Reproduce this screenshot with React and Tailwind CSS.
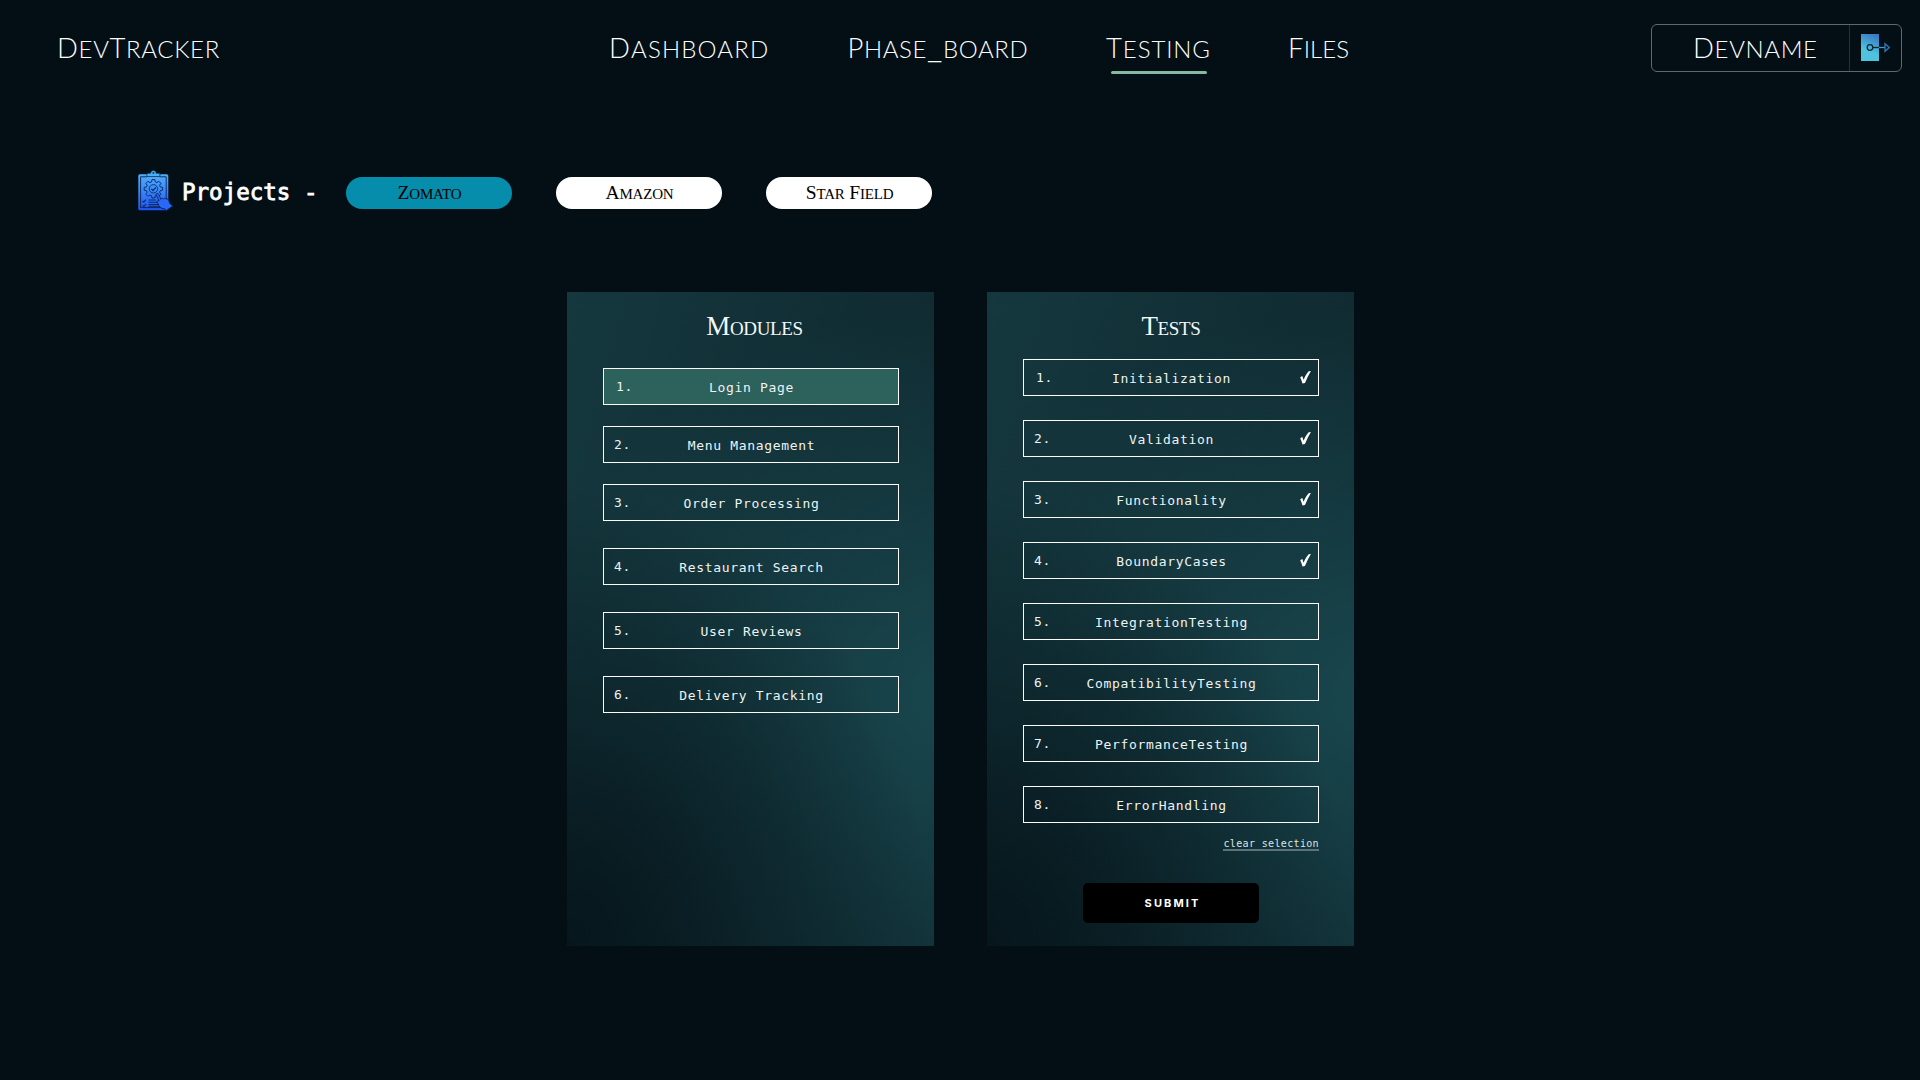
import React from "react";

const modules = ["Login Page", "Menu Management", "Order Processing", "Restaurant Search", "User Reviews", "Delivery Tracking"];

const tests = [
  ["Initialization", true],
  ["Validation", true],
  ["Functionality", true],
  ["BoundaryCases", true],
  ["IntegrationTesting", false],
  ["CompatibilityTesting", false],
  ["PerformanceTesting", false],
  ["ErrorHandling", false],
];

/* Renders capitals at full size and the remaining letters as small capitals. */
function Caps({ text, small }) {
  return text.split(/([A-Z ]+)/).map((part, i) =>
    /^[A-Z ]*$/.test(part) ? part : (
      <span key={i} className={`[font-variant-caps:small-caps] ${small}`}>{part}</span>
    )
  );
}

function NavText({ text, className = "" }) {
  return (
    <span className={`block whitespace-nowrap font-['Lato',sans-serif] text-[27.5px] font-light leading-[47px] ${className}`}>
      <Caps text={text} small="text-[34px] leading-[0]" />
    </span>
  );
}

function DoorIcon() {
  return (
    <svg width="30" height="28" viewBox="0 0 30 28" fill="none">
      <defs>
        <linearGradient id="door" x1="16" y1="0" x2="6" y2="22" gradientUnits="userSpaceOnUse">
          <stop offset="0" stopColor="#3b74bd" />
          <stop offset="0.45" stopColor="#41a0d2" />
          <stop offset="0.8" stopColor="#4fc3dd" />
        </linearGradient>
      </defs>
      <rect width="18" height="27" fill="url(#door)" />
      <circle cx="9" cy="13.5" r="2.8" stroke="#0b2631" strokeWidth="1.3" />
      <path d="M12 13.5h6" stroke="#0b2631" strokeWidth="1.3" />
      <path d="M18 13.5h6" stroke="#3b9bd8" strokeWidth="1.3" />
      <path d="M24 9.7v7.6l4.3-3.8z" stroke="#2f79b8" strokeWidth="1.3" />
    </svg>
  );
}

function ClipboardIcon() {
  return (
    <svg width="36" height="42" viewBox="0 0 36 42" fill="none">
      <defs>
        <linearGradient id="clip" x1="0" y1="0" x2="0" y2="42" gradientUnits="userSpaceOnUse">
          <stop offset="0" stopColor="#55b9fb" />
          <stop offset="0.5" stopColor="#3a86fb" />
          <stop offset="1" stopColor="#1c50f4" />
        </linearGradient>
      </defs>
      <rect x="0.3" y="4.3" width="30" height="36" rx="1.6" fill="url(#clip)" />
      <path d="M9 6.8H2.6v30.8h25.6V6.8h-6.4" stroke="#0a2350" strokeWidth="0.9" />
      <path d="M9 6.5V3.2h3.6a2.8 2.8 0 0 1 5.6 0h3.7v3.3z" fill="#4aaff5" stroke="#0a2340" strokeWidth="0.7" />
      <circle cx="15.4" cy="2.9" r="0.9" fill="#0a2340" />
      <path d="M14 9.6h2.8l.5 2.3 1.6.7 2-1.3 2 2-1.3 2 .7 1.6 2.3.5v2.8l-2.3.5-.7 1.6 1.3 2-2 2-2-1.3-1.6.7-.5 2.3H14l-.5-2.3-1.6-.7-2 1.3-2-2 1.3-2-.7-1.600-2.300-.5v-2.800l2.300-.5.7-1.600-1.300-2 2-2 2 1.300 1.600-.7z" stroke="#0b2f66" strokeWidth="1" />
      <circle cx="15.4" cy="18.8" r="4.2" stroke="#0b2f66" strokeWidth="0.9" />
      <path d="m13.3 18.8 1.7 1.7 2.8-3.2" stroke="#0b2f66" strokeWidth="1.2" />
      <path d="m4.6 31 1.2 1.2 2.2-2.6M4.6 35.4l1.2 1.2L8 34M10.5 30h7.5M10.5 32.3h8.5M10.5 34.6h10M10.5 36.9h11" stroke="#0b2a66" strokeWidth="1.1" />
      <path d="M18.6 23.6c1-.6 2 .2 2.4 1.2l1.7 4.4c1-1.2 2.3-1 2.9-.2.9-1 2.2-.7 2.7.2 1.2-.6 2 .1 2.3 1.1l1.3 3.4 2.9 2.3-6.6 4.6-1.3-1.8c-3 .1-5.2-1.3-6.2-3.6l-1.5-3.1c-.4-1.2.8-2 1.9-1.2l-2.9-5.8c-.3-.6-.1-1.2.4-1.5z" fill="#2868fa" stroke="#0a2350" strokeWidth="0.9" />
    </svg>
  );
}

function Pill({ text, className }) {
  return (
    <button className={`h-8 w-[166px] rounded-2xl pl-px text-center font-['Liberation_Serif',serif] text-[19.5px] leading-8 tracking-[-0.2px] text-black ${className}`}>
      <Caps text={text} small="text-[21px] leading-[0]" />
    </button>
  );
}

function Row({ n, text, checked, active, className }) {
  return (
    <div className={`relative flex h-[37px] w-[296px] shrink-0 items-center justify-center border border-white font-['DejaVu_Sans_Mono',monospace] text-[13px] tracking-[0.67px] text-[#eef3f3] ${active ? "bg-[#2c615c]" : ""} ${className}`}>
      <span className={`absolute top-[9px] leading-[18px] ${n === 1 ? "left-[12px]" : "left-[10px]"}`}>{n}.</span>
      <span className="pl-px pt-[2px] leading-[18px]">{text}</span>
      {checked && (
        <svg className="absolute right-[7px] top-[11px]" width="11" height="13" viewBox="0 0 11 13" fill="none">
          <path d="M0.2 6.200 2.300 5 3.600 8.800C5 5.300 6.700 2.500 8.700 0.300L10.900 0.100C8.700 3.800 6.700 7.900 5 12L2.500 12.600C1.800 10.200 1.100 8.300 0.200 6.200Z" fill="#fff" />
        </svg>
      )}
    </div>
  );
}

function Panel({ title, titleClass, children }) {
  return (
    <section className="flex h-[654px] w-[367px] flex-col items-center bg-[radial-gradient(ellipse_100%_70%_at_0%_100%,#06161c_0%,#06161cbb_30%,#06161c00_100%),radial-gradient(ellipse_120%_60%_at_108%_62%,#19474e_0%,#19474e00_100%),linear-gradient(105deg,#14383e_0%,#112c33_60%,#0f282f_100%)] pl-px">
      <h2 className={`h-[66px] pt-[18px] font-['Liberation_Serif',serif] text-[27px] leading-[32px] tracking-[-0.35px] text-[#f4f7f7] ${titleClass}`}>
        <Caps text={title} small="text-[27.5px] leading-[0]" />
      </h2>
      {children}
    </section>
  );
}

export default function App() {
  return (
    <div className="h-[1080px] w-[1920px] overflow-hidden bg-[#030f14] text-white">
      <header className="flex h-24 items-start pl-[57px] pr-[18px] pt-6">
        <NavText text="DevTracker" className="w-[552px] tracking-[0.65px]" />
        <nav className="flex">
          <NavText text="Dashboard" className="w-[238.500px] tracking-[1.15px]" />
          <NavText text="Phase_board" className="w-[258.500px] tracking-[0.6px]" />
          <div className="w-[183px]">
            <NavText text="Testing" className="h-[47px] tracking-[0.9px]" />
            <div className="ml-[5px] h-[3px] w-24 rounded-full bg-[#85b89f]" />
          </div>
          <NavText text="Files" className="-ml-px tracking-[0.1px]" />
        </nav>
        <div className="ml-auto flex h-12 w-[251px] rounded-md border border-[#5e696d]">
          <div className="w-[198px] border-r border-[#253238] pl-[41px]">
            <NavText text="Devname" className="-mt-px tracking-[0.65px]" />
          </div>
          <div className="flex items-center pl-[11px]">
            <DoorIcon />
          </div>
        </div>
      </header>

      <div className="mt-[70px] flex h-[52px] items-center pl-[138px]">
        <div className="-mt-[3px]">
          <ClipboardIcon />
        </div>
        <span className="w-[172px] whitespace-pre pl-[8px] font-['DejaVu_Sans_Mono',monospace] text-[22.5px] leading-8 [-webkit-text-stroke:0.8px_white]">Projects -</span>
        <div className="flex gap-11 pt-px">
          <Pill text="Zomato" className="bg-[#068dab]" />
          <Pill text="Amazon" className="bg-white" />
          <Pill text="Star Field" className="bg-white" />
        </div>
      </div>

      <main className="mt-[74px] flex gap-[53px] pl-[567px]">
        <Panel title="Modules" titleClass="pl-[7px]">
          <div className="flex flex-col pt-[10px]">
            {modules.map((m, i) => (
              <Row key={m} n={i + 1} text={m} active={i === 0} className={i === 0 ? "" : i < 3 ? "mt-[21px]" : "mt-[27px]"} />
            ))}
          </div>
        </Panel>
        <Panel title="Tests" titleClass="">
          <div className="flex flex-col gap-6 pt-px">
            {tests.map(([t, c], i) => (
              <Row key={t} n={i + 1} text={t} checked={c} className="" />
            ))}
          </div>
          <div className="flex w-[296px] justify-end pt-[12px]">
            <span className="h-[16px] border-b-2 border-[#5c7479] font-['DejaVu_Sans_Mono',monospace] text-[10px] leading-[17px] tracking-[0.35px] text-[#dde4e5]">clear selection</span>
          </div>
          <button className="mt-[32px] h-10 w-44 rounded-[5px] bg-black pl-[3px] font-['Inter',sans-serif] text-[11px] font-bold leading-10 tracking-[2.1px] text-white">SUBMIT</button>
        </Panel>
      </main>
    </div>
  );
}
